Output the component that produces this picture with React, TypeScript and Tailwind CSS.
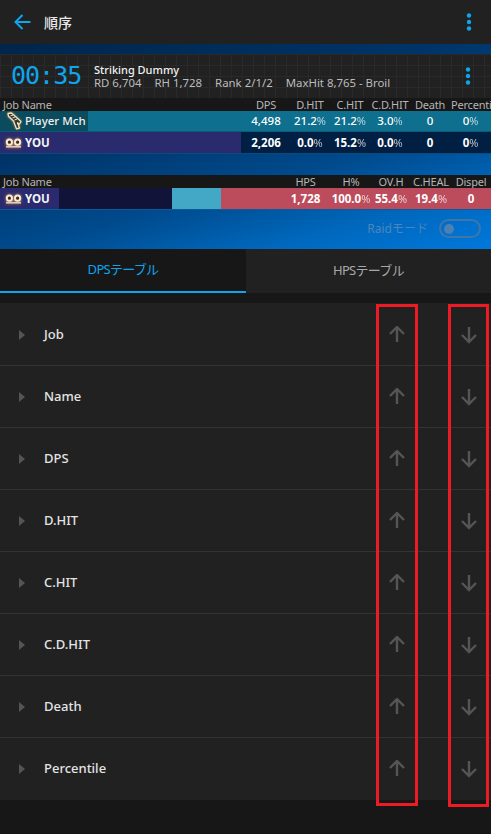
import React from "react";

const sans = "font-['Noto_Sans','Noto_Sans_CJK_JP',sans-serif]";

function MchIcon() {
  return (
    <svg width="16" height="18" viewBox="0 0 16 18" className="shrink-0 drop-shadow-[0_0_1px_#c98a40]">
      <path d="M1 1.5 L4.5 1 L14 9.5 L12.5 12 L10.5 10.8 L12.5 16 L9.5 16.8 L6.5 9 L1.5 4.2 Z" fill="#2e3a3c" stroke="#f4e0bb" strokeWidth="1.3" strokeLinejoin="round" />
      <path d="M3.5 4 L6 3 M5.5 6 L8 5 M7.5 8 L10 7" stroke="#f4e0bb" strokeWidth="1" />
    </svg>
  );
}

function ScholarIcon() {
  return (
    <svg width="17" height="12" viewBox="0 0 17 12" className="shrink-0 drop-shadow-[0_0_1.5px_#d8934a]">
      <circle cx="4.4" cy="5.2" r="2.6" fill="#3a2a20" stroke="#f6ead6" strokeWidth="2" />
      <circle cx="12.6" cy="5.2" r="2.6" fill="#3a2a20" stroke="#f6ead6" strokeWidth="2" />
      <path d="M1 9.8 H16" stroke="#f0dcc0" strokeWidth="1.4" />
    </svg>
  );
}

function Pct({ v, cls = "" }: { v: string; cls?: string }) {
  return (
    <span className={`text-center ${cls}`}>
      {v}
      <span className="text-[11px] font-normal opacity-70">%</span>
    </span>
  );
}

function HeaderDots() {
  return (
    <svg width="6" height="18" viewBox="0 0 6 18" className="shrink-0">
      <circle cx="3" cy="2.5" r="2.2" fill="#0ea5ed" />
      <circle cx="3" cy="9" r="2.2" fill="#0ea5ed" />
      <circle cx="3" cy="15.5" r="2.2" fill="#0ea5ed" />
    </svg>
  );
}

function Arrow({ up }: { up?: boolean }) {
  return (
    <svg width="18" height="18" viewBox={up ? "0 1 18 18" : "0 0 18 18"} className={up ? "" : "rotate-180"}>
      <path d="M9 17 V2.5 M2 9 L9 2 L16 9" fill="none" stroke="#555555" strokeWidth="2.4" />
    </svg>
  );
}

const rows = ["Job", "Name", "DPS", "D.HIT", "C.HIT", "C.D.HIT", "Death", "Percentile"];

export default function App() {
  return (
    <div className={`relative w-[491px] h-[834px] overflow-hidden bg-[#171717] text-white ${sans}`}>
      {/* App bar */}
      <div className="h-[44px] bg-[#212121] flex items-center pl-[14px] pr-[19px]">
        <svg width="17" height="16" viewBox="0 0 17 16" className="shrink-0">
          <path d="M16.5 8 H2 M8.5 1 L1.5 8 L8.5 15" fill="none" stroke="#0ea5ed" strokeWidth="2" />
        </svg>
        <span className="ml-[13px] text-[14px] font-medium text-[#e8e8e8]">順序</span>
        <span className="ml-auto flex"><HeaderDots /></span>
      </div>

      {/* Overlay preview */}
      <div className="h-[205px] flex flex-col bg-[linear-gradient(165deg,#00254a_0%,#003468_35%,#004a8c_62%,#0068bd_82%,#0078dc_100%)]">
        <div className="h-[10px]" />
        <div className="h-[44px] flex items-center bg-[#212121] pl-[11px] pr-[20px] bg-[linear-gradient(#292929_1px,transparent_1px),linear-gradient(90deg,#292929_1px,transparent_1px)] bg-[size:11px_11px]">
          <span className="w-[71px] font-['DejaVu_Sans_Mono',monospace] text-[25px] leading-[28px] text-[#0ea5ed] tracking-[-1px]">00:35</span>
          <div className="ml-[12px] flex flex-col">
            <span className="text-[11px] leading-[13px] font-medium text-[#f2f2f2]">Striking Dummy</span>
            <span className="text-[11.4px] leading-[13px] text-[#bdbdbd] whitespace-nowrap flex gap-[13px]">
              <span>RD 6,704</span>
              <span>RH 1,728</span>
              <span>Rank 2/1/2</span>
              <span>MaxHit 8,765 - Broil</span>
            </span>
          </div>
          <span className="ml-auto flex"><HeaderDots /></span>
        </div>

        <div className="h-[13px] bg-[#171717] flex items-center text-[11px] leading-[13px] tracking-[-0.2px] text-[#b5b5b5] whitespace-nowrap overflow-hidden">
          <span className="ml-[3px] flex-1">Job Name</span>
          <span className="w-[40px] text-center mr-[4px]">DPS</span>
          <span className="w-[40px] text-center">D.HIT</span>
          <span className="w-[40px] text-center">C.HIT</span>
          <span className="w-[40px] text-center">C.D.HIT</span>
          <span className="w-[40px] text-center">Death</span>
          <span className="w-[41px] pl-[1px]">Percentile</span>
        </div>

        <div className="h-[21px] flex items-center bg-[#0e6f8e] border-b border-[#0b5a78] text-[11.5px] leading-[20px] font-medium whitespace-nowrap">
          <div className="w-[88px] h-full bg-[#0a4b5d] flex items-center pl-[7px] gap-[2px]">
            <MchIcon />
            <span className="text-[#f0f0f0]">Player Mch</span>
          </div>
          <span className="flex-1" />
          <span className="w-[40px] text-center mr-[4px]">4,498</span>
          <Pct v="21.2" cls="w-[40px]" />
          <Pct v="21.2" cls="w-[40px]" />
          <Pct v="3.0" cls="w-[40px]" />
          <span className="w-[40px] text-center">0</span>
          <Pct v="0" cls="w-[41px]" />
        </div>

        <div className="h-[22px] flex items-center bg-[#001f42] border-b border-[#0a4a7c] text-[11.5px] leading-[20px] font-bold whitespace-nowrap">
          <div className="w-[241px] h-full bg-[#2a2a6e] flex items-center pl-[5px] gap-[3px]">
            <ScholarIcon />
            <span className="text-[#f4f4f4]">YOU</span>
          </div>
          <span className="flex-1" />
          <span className="w-[40px] text-center mr-[4px]">2,206</span>
          <Pct v="0.0" cls="w-[40px]" />
          <Pct v="15.2" cls="w-[40px]" />
          <Pct v="0.0" cls="w-[40px]" />
          <span className="w-[40px] text-center">0</span>
          <Pct v="0" cls="w-[41px]" />
        </div>

        <div className="h-[21px]" />

        <div className="h-[13px] bg-[#171717] flex items-center text-[11px] leading-[13px] tracking-[-0.2px] text-[#b5b5b5] whitespace-nowrap">
          <span className="ml-[3px] flex-1">Job Name</span>
          <span className="w-[40px] text-center mr-[5.5px]">HPS</span>
          <span className="w-[40px] text-center">H%</span>
          <span className="w-[40px] text-center">OV.H</span>
          <span className="w-[40px] text-center">C.HEAL</span>
          <span className="w-[40px] text-center">Dispel</span>
        </div>

        <div className="h-[22px] flex items-center border-b border-[#0a5a9c] text-[11.5px] leading-[20px] font-bold whitespace-nowrap">
          <div className="w-[59px] h-full bg-[#2a2a6e] flex items-center pl-[5px] gap-[3px]">
            <ScholarIcon />
            <span className="text-[#f4f4f4]">YOU</span>
          </div>
          <div className="w-[113px] h-full bg-[#121338]" />
          <div className="w-[49px] h-full bg-[#43a8c6]" />
          <div className="flex-1 h-full bg-[#bc4c5c] flex items-center justify-end">
            <span className="w-[40px] text-center mr-[5.5px]">1,728</span>
            <Pct v="100.0" cls="w-[40px]" />
            <Pct v="55.4" cls="w-[40px]" />
            <Pct v="19.4" cls="w-[40px]" />
            <span className="w-[40px] text-center">0</span>
          </div>
        </div>

        <div className="flex-1 flex items-center justify-end pr-[10px] pb-[2px]">
          <span className="text-[12px] leading-[18px] text-[#4a86bd]">Raidモード</span>
          <span className="ml-[11px] w-[42px] h-[19px] rounded-full border-2 border-[#3f76aa] flex items-center pl-[3px]">
            <span className="w-[10px] h-[10px] rounded-full bg-[#4a80b4]" />
          </span>
        </div>
      </div>

      {/* Tabs */}
      <div className="h-[44px] flex text-[13px] tracking-[-0.7px]">
        <div className="w-[246px] bg-[#171717] border-b-2 border-[#0ea5ed] text-[#0ea5ed] flex items-center justify-center">DPSテーブル</div>
        <div className="flex-1 bg-[#212121] text-[#a8a8a8] flex items-center justify-center">HPSテーブル</div>
      </div>

      {/* Sort list */}
      <div className="mt-[10px] pt-[1px] flex flex-col bg-[#212121]">
        {rows.map((r, i) => (
          <div key={r} className={`h-[62px] flex items-center ${i < rows.length - 1 ? "border-b border-[#333333]" : ""}`}>
            <svg width="6" height="10" viewBox="0 0 6 10" className="ml-[19px] shrink-0">
              <path d="M0 0 L6 5 L0 10 Z" fill="#555555" />
            </svg>
            <span className="ml-[19px] text-[13px] font-medium text-[#e4e4e4]">{r}</span>
            <span className="ml-auto mr-[54px]"><Arrow up /></span>
            <span className="mr-[13px]"><Arrow /></span>
          </div>
        ))}
      </div>

      {/* Annotation boxes */}
      <div className="absolute left-[376px] top-[304px] w-[42px] h-[502px] border-[3px] border-[#ed1c24]" />
      <div className="absolute left-[448px] top-[304px] w-[41px] h-[503px] border-[3px] border-[#ed1c24]" />
    </div>
  );
}
